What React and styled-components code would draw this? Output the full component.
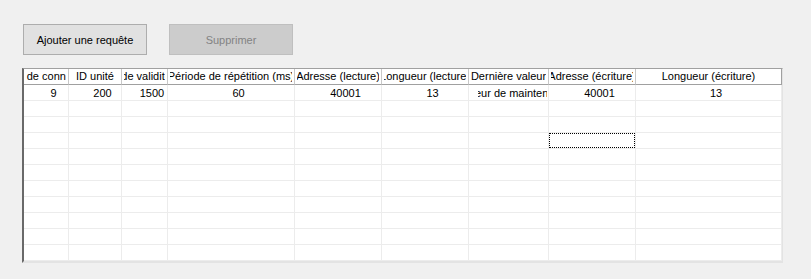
import React from 'react';
import styled, { createGlobalStyle } from 'styled-components';

const columns = [
  { title: 'Type de connexion', width: 45 },
  { title: 'ID unité', width: 53 },
  { title: 'Délai de validité (ms)', width: 46 },
  { title: 'Période de répétition (ms)', width: 127 },
  { title: 'Adresse (lecture)', width: 87 },
  { title: 'Longueur (lecture)', width: 87 },
  { title: 'Dernière valeur', width: 80 },
  { title: 'Adresse (écriture)', width: 87 },
  { title: 'Longueur (écriture)', width: 146 },
];

const rows = [
  ['9', '200', '1500', '60', '40001', '13', 'Valeur de maintenance', '40001', '13'],
  ...Array.from({ length: 10 }, () => Array(9).fill('')),
];

// cell that holds the keyboard focus rectangle
const focus = { row: 3, col: 7 };

const GlobalStyle = createGlobalStyle`
  html, body {
    margin: 0;
    background: #f0f0f0;
  }
  body {
    font-family: "Liberation Sans", Arial, sans-serif;
    font-size: 11px;
    color: #000;
  }
`;

const Page = styled.div`
  display: flex;
  flex-direction: column;
  align-items: flex-start;
  padding: 24px 0 0 22px;
`;

const Toolbar = styled.div`
  display: flex;
  gap: 22px;
  margin-left: 1px;
`;

const Button = styled.button`
  width: 124px;
  height: 31px;
  padding: 0;
  font: inherit;
  color: ${p => (p.disabled ? '#838383' : '#000')};
  background: ${p => (p.disabled ? '#cccccc' : '#e1e1e1')};
  border: 1px solid ${p => (p.disabled ? '#bfbfbf' : '#adadad')};
  cursor: default;
`;

const Grid = styled.div`
  margin-top: 13px;
  width: 761px;
  box-sizing: border-box;
  border-top: 1px solid #a0a0a0;
  border-left: 2px solid #696969;
  border-right: 1px solid #e3e3e3;
  border-bottom: 2px solid #e3e3e3;
  background: #fff;
`;

const Row = styled.div`
  display: flex;
  height: 16px;
`;

const HeadCell = styled.div`
  box-sizing: border-box;
  flex: none;
  display: flex;
  width: ${p => p.$w}px;
  border-right: 1px solid ${p => (p.$last ? '#a0a0a0' : '#c8c8c8')};
  border-bottom: 1px solid #a0a0a0;
  background: #fff;
`;

const HeadText = styled.div`
  flex: 1;
  min-width: 0;
  display: flex;
  align-items: center;
  justify-content: center;
  overflow: hidden;
  white-space: nowrap;
  margin: 0 2px;
  padding-bottom: 1px;
`;

const Cell = styled.div`
  position: relative;
  box-sizing: border-box;
  flex: none;
  display: flex;
  width: ${p => p.$w}px;
  border-right: 1px solid #ececec;
  border-bottom: 1px solid #ececec;

  &::after {
    content: '';
    display: ${p => (p.$focused ? 'block' : 'none')};
    position: absolute;
    inset: 0;
    border: 1px dotted #000;
  }
`;

const CellText = styled.div`
  flex: 1;
  min-width: 0;
  display: flex;
  align-items: center;
  justify-content: center;
  overflow: hidden;
  white-space: nowrap;
  margin: 0 1px 0 9px;
  padding-left: 7px;
`;

export default function App() {
  return (
    <>
      <GlobalStyle />
      <Page>
        <Toolbar>
          <Button>Ajouter une requête</Button>
          <Button disabled>Supprimer</Button>
        </Toolbar>
        <Grid>
          <Row>
            {columns.map((c, i) => (
              <HeadCell key={c.title} $w={c.width} $last={i === columns.length - 1}>
                <HeadText>
                  <span>{c.title}</span>
                </HeadText>
              </HeadCell>
            ))}
          </Row>
          {rows.map((r, ri) => (
            <Row key={ri}>
              {r.map((v, ci) => (
                <Cell
                  key={ci}
                  $w={columns[ci].width}
                  $focused={ri === focus.row && ci === focus.col}
                >
                  <CellText>
                    <span>{v}</span>
                  </CellText>
                </Cell>
              ))}
            </Row>
          ))}
        </Grid>
      </Page>
    </>
  );
}
